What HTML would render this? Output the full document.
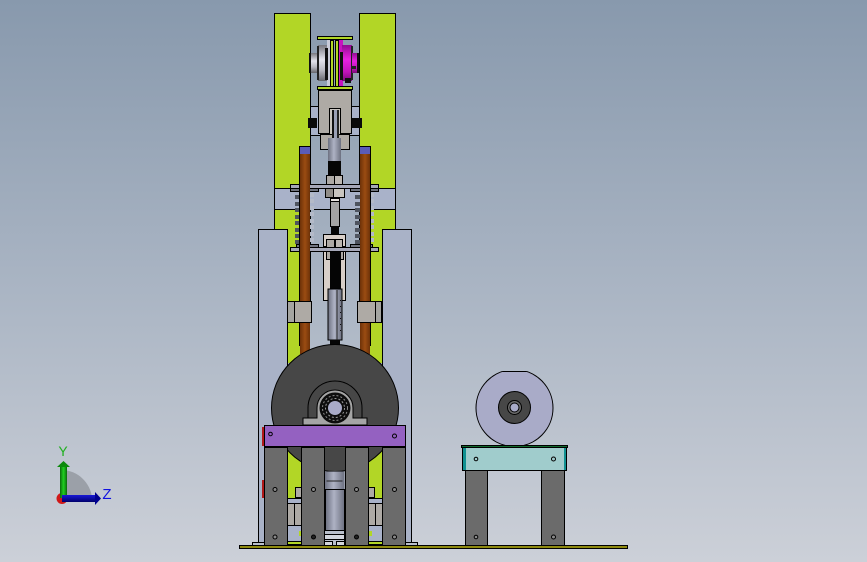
<!DOCTYPE html>
<html><head><meta charset="utf-8"><style>
html,body{margin:0;padding:0;width:867px;height:562px;overflow:hidden;background:#aab4c2}
svg{display:block}
</style></head><body>
<svg width="867" height="562" viewBox="0 0 867 562" xmlns="http://www.w3.org/2000/svg">
<defs>
<linearGradient id="bg" x1="0" y1="0" x2="0" y2="1"><stop offset="0" stop-color="#8899ad"/><stop offset="0.5" stop-color="#a9b4c3"/><stop offset="1" stop-color="#ccd0d8"/></linearGradient>
<linearGradient id="rod" x1="0" x2="1" y1="0" y2="0"><stop offset="0" stop-color="#6e3208"/><stop offset=".5" stop-color="#9a4c12"/><stop offset="1" stop-color="#6e3208"/></linearGradient>
<linearGradient id="cyl" x1="0" x2="1" y1="0" y2="0"><stop offset="0" stop-color="#6c7080"/><stop offset=".45" stop-color="#aeb2c4"/><stop offset="1" stop-color="#6c7080"/></linearGradient>
<linearGradient id="silver" x1="0" x2="0" y1="0" y2="1"><stop offset="0" stop-color="#77777e"/><stop offset=".4" stop-color="#e4e4ec"/><stop offset=".7" stop-color="#b8b8c0"/><stop offset="1" stop-color="#66666c"/></linearGradient>
<linearGradient id="mag" x1="0" x2="0" y1="0" y2="1"><stop offset="0" stop-color="#900c90"/><stop offset=".4" stop-color="#e822e0"/><stop offset=".75" stop-color="#c014b8"/><stop offset="1" stop-color="#7a0a78"/></linearGradient>
<linearGradient id="gA" x1="0" x2="1" y1="0" y2="0"><stop offset="0" stop-color="#0a6a0a"/><stop offset=".5" stop-color="#20d020"/><stop offset="1" stop-color="#0a6a0a"/></linearGradient>
<linearGradient id="bA" x1="0" x2="0" y1="0" y2="1"><stop offset="0" stop-color="#1818d8"/><stop offset="1" stop-color="#00006a"/></linearGradient>
<clipPath id="dc"><rect x="470" y="371" width="90" height="74"/></clipPath>
</defs>
<rect width="867" height="562" fill="url(#bg)"/>

<g stroke="#000" stroke-width="1" shape-rendering="crispEdges">
<rect x="274.5" y="13.5" width="36" height="300" fill="#b2d626"/>
<rect x="359.5" y="13.5" width="36" height="300" fill="#b2d626"/>
<rect x="288" y="313" width="12" height="50" fill="#b2d626" stroke="none"/>
<rect x="370" y="313" width="12" height="50" fill="#b2d626" stroke="none"/>
<rect x="258.5" y="229.5" width="29" height="316" fill="#a9b2c7"/>
<rect x="382.5" y="229.5" width="29" height="316" fill="#a9b2c7"/>
<rect x="274.5" y="188.5" width="121" height="21" fill="#a9b2c9"/>
<rect x="310.5" y="106.5" width="49" height="29" fill="#a9b2c9"/>
</g>

<!-- pulleys -->
<g shape-rendering="crispEdges">
<rect x="310" y="53" width="9" height="20" fill="url(#silver)"/>
<rect x="309" y="53" width="2" height="20" fill="#111"/>
<rect x="318" y="45" width="10" height="36" fill="url(#silver)"/>
<rect x="317" y="46" width="2" height="34" fill="#222"/>
<rect x="327" y="40" width="3" height="47" fill="#c9cbd8"/>
<rect x="325" y="48" width="3" height="32" fill="#111"/>
<rect x="339" y="40" width="4" height="47" fill="#c814c0"/>
<rect x="342" y="45" width="10" height="36" fill="url(#mag)"/>
<rect x="340" y="52" width="3" height="28" fill="#111"/>
<rect x="351" y="46" width="2" height="34" fill="#222"/>
<rect x="352" y="53" width="5" height="20" fill="url(#mag)"/>
<rect x="357" y="53" width="2" height="20" fill="#111"/>
<rect x="345" y="78" width="6" height="5" fill="#111"/>
<rect x="352" y="66" width="4" height="3" fill="#222"/>
</g>
<g stroke="#000" stroke-width="1" shape-rendering="crispEdges">
<rect x="330.5" y="40.5" width="3" height="46" fill="#b2d626"/>
<rect x="335.5" y="40.5" width="3" height="46" fill="#b2d626"/>
<rect x="317.5" y="36.5" width="35" height="3" fill="#b2d626"/>
<rect x="317.5" y="86.5" width="35" height="3" fill="#b2d626"/>
<rect x="320.5" y="134.5" width="29" height="15" fill="#aeaaa5"/>
<rect x="318.5" y="90.5" width="33" height="43" fill="#aeaaa5"/>
<rect x="329.5" y="108.5" width="11" height="26" fill="#c9c5c0"/>
</g>
<g shape-rendering="crispEdges">
<rect x="332" y="110" width="2" height="30" fill="#111"/>
<rect x="337" y="110" width="2" height="30" fill="#222"/>
<rect x="334" y="110" width="3" height="28" fill="#9aa0b5"/>
<rect x="308" y="118" width="9" height="10" fill="#0a0a0a"/>
<rect x="352" y="118" width="10" height="10" fill="#0a0a0a"/>
<rect x="328" y="138" width="13" height="24" fill="url(#cyl)"/>
<rect x="328" y="161" width="13" height="15" fill="#050505"/>
</g>
<g stroke="#000" stroke-width="1" shape-rendering="crispEdges">
<rect x="326.5" y="175.5" width="8" height="9" fill="#aeaaa5"/>
<rect x="334.5" y="175.5" width="8" height="9" fill="#bdb8b2"/>
</g>

<!-- shaft mid -->
<g stroke="#000" stroke-width="1" shape-rendering="crispEdges">
<rect x="330.5" y="196.5" width="9" height="30" fill="#a3a3a3"/>
<rect x="330.5" y="198.5" width="9" height="3" fill="#e8e4e0"/>
<rect x="325.5" y="188.5" width="8" height="9" fill="#908c88"/>
<rect x="333.5" y="188.5" width="11" height="9" fill="#c9c5c0"/>
</g>
<rect x="331" y="226" width="8" height="9" fill="#050505" shape-rendering="crispEdges"/>

<!-- lower tan guide -->
<g stroke="#000" stroke-width="1" shape-rendering="crispEdges">
<rect x="323.5" y="250.5" width="22" height="50" fill="#d8cfc8"/>
<rect x="323.5" y="234.5" width="22" height="12" fill="#d8cfc8"/>
<rect x="326.5" y="239.5" width="8" height="8" fill="#aeaaa5"/>
<rect x="335.5" y="239.5" width="7" height="8" fill="#bdb8b2"/>
<rect x="326.5" y="251.5" width="4" height="8" fill="#aeaaa5"/>
<rect x="340.5" y="251.5" width="3" height="8" fill="#aeaaa5"/>
</g>
<rect x="330" y="250" width="11" height="42" fill="#050505" shape-rendering="crispEdges"/>
<rect x="328" y="289" width="14" height="51" fill="url(#cyl)" stroke="#000" shape-rendering="crispEdges"/>
<rect x="336.5" y="290" width="1" height="50" fill="#222"/>
<g fill="#111"><rect x="340" y="300" width="1" height="1"/><rect x="340" y="306" width="1" height="1"/><rect x="340" y="312" width="1" height="1"/><rect x="340" y="318" width="1" height="1"/><rect x="340" y="324" width="1" height="1"/><rect x="340" y="330" width="1" height="1"/></g>
<rect x="330" y="340" width="10" height="6" fill="#050505"/>

<!-- springs -->
<g stroke-width="4" fill="none">
<path stroke="#4e535e" d="M295 197h7M295 204h7M295 210h7M295 217h7M295 223h7M295 230h7M295 236h7M295 242h7"/>
<path stroke="#4e535e" d="M355 197h7M355 204h7M355 210h7M355 217h7M355 223h7M355 230h7M355 236h7M355 242h7"/>
<path stroke="#b4bac8" d="M308 195h6M308 201h6M308 208h6M308 214h6M308 221h6M308 227h6M308 234h6M308 240h6"/>
<path stroke="#b4bac8" d="M368 195h6M368 201h6M368 208h6M368 214h6M368 221h6M368 227h6M368 234h6M368 240h6"/>
</g>

<!-- spring plates -->
<g stroke="#000" stroke-width="1" shape-rendering="crispEdges" fill="#a6a8b8">
<rect x="290.5" y="184.5" width="88" height="4"/>
<rect x="290.5" y="188.5" width="28" height="3" fill="#70747f"/>
<rect x="350.5" y="188.5" width="28" height="3" fill="#70747f"/>
<rect x="290.5" y="247.5" width="88" height="4"/>
<rect x="296.5" y="244.5" width="22" height="3" fill="#70747f"/>
<rect x="350.5" y="244.5" width="22" height="3" fill="#70747f"/>
</g>

<!-- rods -->
<g shape-rendering="crispEdges">
<rect x="300" y="154" width="10" height="200" fill="url(#rod)"/>
<rect x="360" y="154" width="10" height="200" fill="url(#rod)"/>
<rect x="300" y="147" width="10" height="7" fill="#5a5cb8"/>
<rect x="360" y="147" width="10" height="7" fill="#5a5cb8"/>
<rect x="299" y="146" width="11" height="1" fill="#000"/>
<rect x="360" y="146" width="11" height="1" fill="#000"/>
<rect x="299" y="146" width="1" height="200" fill="#000"/>
<rect x="370" y="146" width="1" height="200" fill="#000"/>
</g>

<!-- side blocks -->
<g stroke="#000" stroke-width="1" shape-rendering="crispEdges" fill="#aeaaa5">
<rect x="287.5" y="301.5" width="7" height="21" fill="#a5a5a1"/>
<rect x="294.5" y="301.5" width="17" height="21"/>
<rect x="357.5" y="301.5" width="18" height="21"/>
<rect x="375.5" y="301.5" width="6" height="21" fill="#a5a5a1"/>
</g>

<!-- lower green behind disc -->
<g shape-rendering="crispEdges">
<rect x="287" y="447" width="14" height="52" fill="#b2d626"/>
<rect x="368" y="447" width="14" height="52" fill="#b2d626"/>
</g>

<!-- disc -->
<circle cx="335" cy="408" r="63.5" fill="#474747" stroke="#000" stroke-width="1"/>
<path d="M308 425V408A27 27 0 0 1 362 408V425" fill="none" stroke="#000" stroke-width="1"/>

<g stroke="#000" stroke-width="1" shape-rendering="crispEdges">
<rect x="295.5" y="487.5" width="6" height="10" fill="#aeaaa5"/>
<rect x="368.5" y="487.5" width="6" height="10" fill="#aeaaa5"/>
<rect x="287.5" y="498.5" width="14" height="5" fill="#a9b2c9"/>
<rect x="368.5" y="498.5" width="14" height="5" fill="#a9b2c9"/>
<rect x="287.5" y="503.5" width="7" height="22" fill="#aeaaa5"/>
<rect x="294.5" y="503.5" width="7" height="22" fill="#aeaaa5"/>
<rect x="368.5" y="503.5" width="7" height="22" fill="#aeaaa5"/>
<rect x="375.5" y="503.5" width="7" height="22" fill="#aeaaa5"/>
<rect x="287.5" y="525.5" width="14" height="16" fill="#a9b2c9"/>
<rect x="368.5" y="525.5" width="14" height="16" fill="#a9b2c9"/>
<rect x="287.5" y="541.5" width="14" height="3" fill="#b2d626"/>
<rect x="368.5" y="541.5" width="14" height="3" fill="#b2d626"/>
<rect x="299" y="531" width="2" height="5" fill="#b2d626" stroke="none"/>
<rect x="369" y="531" width="3" height="5" fill="#b2d626" stroke="none"/>
</g>

<!-- center cylinder -->
<g stroke="#000" stroke-width="1" shape-rendering="crispEdges">
<rect x="324.5" y="471.5" width="20" height="18" fill="url(#cyl)" stroke="none"/>
<rect x="326.5" y="480.5" width="16" height="1" fill="#222" stroke="none"/>
<rect x="325.5" y="489.5" width="19" height="41" fill="url(#cyl)"/>
<rect x="324.5" y="530.5" width="20" height="15" fill="#b9bfcb"/>
<rect x="324.5" y="534.5" width="20" height="5" fill="#d2d5dd"/>
<rect x="324.5" y="541.5" width="8" height="4" fill="#d2d5dd"/>
<rect x="336.5" y="541.5" width="8" height="4" fill="#d2d5dd"/>
</g>

<!-- pillow block + bearing -->
<path d="M303 425V418H317V408A18 18 0 0 1 353 408V418H367V425Z" fill="#a5a5a5" stroke="#000" stroke-width="1"/>
<circle cx="335" cy="408" r="15.5" fill="#0d0d0d"/>
<circle cx="335" cy="408" r="12.5" fill="none" stroke="#8a8a8a" stroke-width="1" stroke-dasharray="2 2"/>
<circle cx="335" cy="408" r="9.5" fill="none" stroke="#9a9a9a" stroke-width="1" stroke-dasharray="2 2"/>
<circle cx="335" cy="408" r="7" fill="#a9abc8"/>

<rect x="262" y="427" width="2" height="19" fill="#b01818"/>
<rect x="262" y="480" width="2" height="18" fill="#b01818"/>

<g stroke="#000" stroke-width="1" shape-rendering="crispEdges" fill="#b9bfcb">
<rect x="252.5" y="542.5" width="12" height="3"/>
<rect x="405.5" y="542.5" width="12" height="3"/>
</g>

<!-- purple plate & legs -->
<g stroke="#000" stroke-width="1" shape-rendering="crispEdges">
<rect x="264.5" y="425.5" width="141" height="21" fill="#9461c1"/>
<rect x="264.5" y="447.5" width="23" height="98" fill="#6b6b6b"/>
<rect x="301.5" y="447.5" width="23" height="98" fill="#6b6b6b"/>
<rect x="345.5" y="447.5" width="23" height="98" fill="#6b6b6b"/>
<rect x="382.5" y="447.5" width="23" height="98" fill="#6b6b6b"/>
<rect x="465.5" y="470.5" width="22" height="75" fill="#6b6b6b"/>
<rect x="541.5" y="470.5" width="23" height="75" fill="#6b6b6b"/>
</g>
<g fill="#8a8a8a" stroke="#000" stroke-width="1">
<circle cx="270.5" cy="434" r="1.8" fill="#9461c1"/>
<circle cx="394.5" cy="436" r="2" fill="#9461c1"/>
<circle cx="275" cy="489.5" r="2"/><circle cx="313.5" cy="489.5" r="2"/><circle cx="356.5" cy="489.5" r="2"/><circle cx="394.5" cy="489.5" r="2"/>
<circle cx="275" cy="537" r="2"/><circle cx="313.5" cy="537" r="2" fill="#222"/><circle cx="356.5" cy="537" r="2" fill="#222"/><circle cx="394.5" cy="537" r="2"/>
<circle cx="476" cy="537" r="1.8"/><circle cx="553.5" cy="537" r="2"/>
</g>

<!-- right assembly -->
<g clip-path="url(#dc)"><circle cx="514.5" cy="408" r="38.5" fill="#a9abc8" stroke="#000" stroke-width="1"/></g>
<path d="M503 371.5H526" stroke="#000" stroke-width="1" shape-rendering="crispEdges"/>
<circle cx="514.5" cy="407.5" r="16" fill="#474747" stroke="#000" stroke-width="1"/>
<circle cx="514.5" cy="407.5" r="7" fill="#6b6b6b" stroke="#000" stroke-width="1"/>
<circle cx="514.5" cy="407.5" r="4.5" fill="#a9abc8" stroke="#000" stroke-width="1"/>
<g stroke="#000" stroke-width="1" shape-rendering="crispEdges">
<rect x="462.5" y="447.5" width="104" height="23" fill="#a0cccc"/>
<rect x="463" y="448" width="3" height="22" fill="#109090" stroke="none"/>
<rect x="564" y="448" width="2" height="22" fill="#109090" stroke="none"/>
<rect x="461.5" y="445.5" width="106" height="2" fill="#0f6a2c"/>
</g>
<circle cx="476" cy="459" r="1.8" fill="#a0cccc" stroke="#000"/>
<circle cx="553.5" cy="459" r="2" fill="#a0cccc" stroke="#000"/>

<rect x="239.5" y="545.5" width="388" height="3" fill="#8f8a10" stroke="#000" stroke-width="1" shape-rendering="crispEdges"/>

<!-- triad -->
<path d="M62 498V470A31 31 0 0 1 92 498Z" fill="#9ba0a8"/>
<circle cx="62" cy="498.5" r="5.5" fill="#d01818"/>
<rect x="60" y="467" width="7" height="31" fill="url(#gA)"/>
<path d="M57 467L63.5 461L70 467Z" fill="#0c8a0c"/>
<rect x="62" y="495" width="33" height="7" fill="url(#bA)"/>
<path d="M95 492L101 498.5L95 505Z" fill="#000090"/>
<text x="63" y="456" font-family="Liberation Sans, sans-serif" font-size="14" fill="#20b020" text-anchor="middle">Y</text>
<text x="107" y="499" font-family="Liberation Sans, sans-serif" font-size="15" fill="#1010e0" text-anchor="middle">Z</text>
</svg>
</body></html>
